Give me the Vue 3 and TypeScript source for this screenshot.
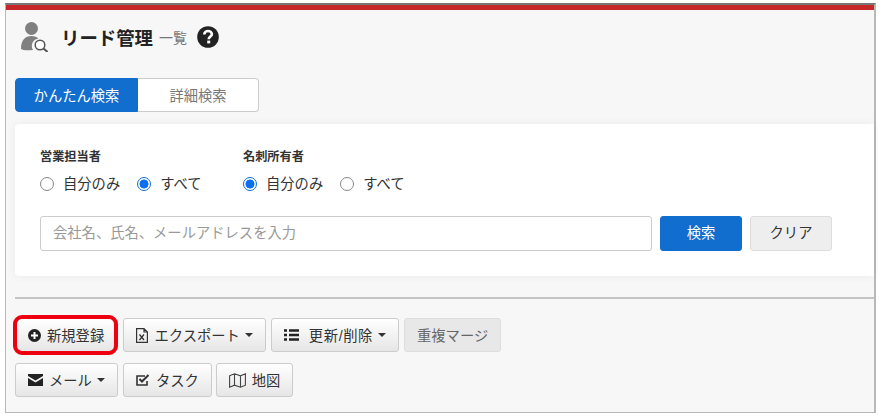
<script setup lang="ts">
const groups = [
  { label: '営業担当者', options: [{ t: '自分のみ', on: false }, { t: 'すべて', on: true }] },
  { label: '名刺所有者', options: [{ t: '自分のみ', on: true }, { t: 'すべて', on: false }] },
]
</script>

<template>
  <div class="frame">
    <div class="redbar"></div>
    <div class="inner">
      <header class="head">
        <svg class="usericon" width="27" height="30" viewBox="0 0 27 30">
          <circle cx="10.500" cy="6.500" r="6.500" fill="#808080" />
          <path d="M0 27 C0 18 4 14 10.500 14 C13.500 14 16 15 17.500 16.500 A7.500 7.500 0 0 0 12 28 C7 28.500 2 28.500 0 27 Z" fill="#808080" />
          <circle cx="19" cy="23" r="4.800" fill="#fff" stroke="#555" stroke-width="1.500" />
          <path d="M22.500 26.500 L26.500 30" stroke="#555" stroke-width="2" />
        </svg>
        <h1 class="title">リード管理</h1>
        <span class="sub">一覧</span>
        <svg class="help" width="22" height="22" viewBox="0 0 22 22">
          <circle cx="11" cy="11" r="10.800" fill="#222" />
          <path d="M7.300 8.500 C7.300 6.300 9 5 11 5 C13.300 5 14.900 6.400 14.900 8.200 C14.900 10.500 11.700 10.700 11.700 13.200" fill="none" stroke="#fff" stroke-width="2.600" />
          <rect x="10.200" y="14.600" width="3" height="2.800" fill="#fff" />
        </svg>
      </header>

      <div class="tabs">
        <div class="tab active">かんたん検索</div>
        <div class="tab">詳細検索</div>
      </div>

      <section class="card">
        <div class="groups">
          <div v-for="g in groups" :key="g.label" class="group">
            <div class="label">{{ g.label }}</div>
            <div class="radios">
              <span v-for="o in g.options" :key="o.t" class="radio-item">
                <span class="radio" :class="{ on: o.on }"></span>{{ o.t }}
              </span>
            </div>
          </div>
        </div>
        <div class="searchrow">
          <div class="input">会社名、氏名、メールアドレスを入力</div>
          <div class="sbtn primary">検索</div>
          <div class="sbtn clear">クリア</div>
        </div>
      </section>

      <hr class="rule" />

      <div class="btnrow row1">
        <div class="highlight">
          <svg width="13" height="13" viewBox="0 0 13 13"><circle cx="6.500" cy="6.500" r="6.500" fill="#222" /><path d="M6.500 3v7M3 6.500h7" stroke="#fff" stroke-width="2" /></svg>
          新規登録
        </div>
        <div class="btn export">
          <svg width="12" height="15" viewBox="0 0 12 15"><path d="M.6 .6h7.400L11.400 4V14.400H.6Z M8 .6V4H11.400" fill="none" stroke="#333" stroke-width="1.200" /><path d="M3.500 6.500l4.500 5.500M8 6.500L3.500 12" stroke="#333" stroke-width="1.300" /></svg>
          エクスポート<span class="caret"></span>
        </div>
        <div class="btn update">
          <svg width="15" height="12" viewBox="0 0 15 12"><path d="M0 1.500h3M5 1.500h10M0 6h3M5 6h10M0 10.500h3M5 10.500h10" stroke="#222" stroke-width="2.400" /></svg>
          <span class="spaced">更新/削除</span><span class="caret"></span>
        </div>
        <div class="btn disabled">重複マージ</div>
      </div>
      <div class="btnrow row2">
        <div class="btn">
          <svg width="15" height="12" viewBox="0 0 15 12"><path d="M0 0h15v2L7.500 6.500 0 2Z M0 4l7.500 4.500L15 4v8H0Z" fill="#222" /></svg>
          メール<span class="caret"></span>
        </div>
        <div class="btn">
          <svg width="14" height="12" viewBox="0 0 14 12"><path d="M11 7v4H1V2h8" fill="none" stroke="#333" stroke-width="1.600" /><path d="M3.500 5l2.500 2.500L12.500 1" fill="none" stroke="#333" stroke-width="2" /></svg>
          タスク
        </div>
        <div class="btn map">
          <svg width="17" height="15" viewBox="0 0 17 15"><path d="M.6 2.800 5.500 .8 11.500 2.800 16.400 .8V12.200L11.500 14.200 5.500 12.200 .6 14.200Z M5.500 .8V12.200M11.500 2.800V14.200" fill="none" stroke="#444" stroke-width="1.100" /></svg>
          地図
        </div>
      </div>
    </div>
  </div>
</template>

<style>
html, body { background: #fff; }
</style>

<style scoped>
.frame {
  box-sizing: border-box;
  width: 871px;
  height: 410px;
  margin: 3px 0 0 5px;
  border: 1px solid #b8b8b8;
  border-width: 2px 2px 1px 1px;
  border-top-color: #777;
  background: #f7f7f7;
  font-family: "Liberation Sans", "Noto Sans CJK JP", sans-serif;
  font-size: 14.300px;
  color: #333;
}
.redbar { height: 5px; background: #c62828; }
.inner { padding: 0 0 0 9px; }
.head { display: flex; align-items: center; height: 54px; padding-left: 6px; }
.usericon { margin-right: 13px; }
.title { margin: 0; font-size: 18.400px; font-weight: 700; color: #222; }
.sub { margin-left: 6px; font-size: 14px; color: #777; }
.help { margin-left: 10px; }
.tabs { display: flex; width: 244px; height: 34px; margin-top: 14px; }
.tab {
  box-sizing: border-box;
  flex: 1;
  display: flex;
  align-items: center;
  justify-content: center;
  padding-bottom: 2px;
  background: #fff;
  border: 1px solid #ccc;
  border-left: 0;
  border-radius: 0 4px 4px 0;
  color: #777;
}
.tab.active {
  flex: 0 0 123px;
  background: #116dce;
  border: 1px solid #116dce;
  border-radius: 4px 0 0 4px;
  color: #fff;
}
.card {
  box-sizing: border-box;
  height: 152px;
  margin-top: 12px;
  padding: 25px 0 0 25px;
  background: #fff;
  border-radius: 4px 0 0 4px;
  box-shadow: 0 0 10px rgba(0, 0, 0, .06);
}
.groups { display: flex; gap: 40px; }
.group { width: 163px; }
.label { font-size: 12.200px; font-weight: 700; color: #333; line-height: 16px; }
.radios { display: flex; gap: 17px; margin-top: 9px; line-height: 20px; }
.radio-item { display: flex; align-items: center; white-space: nowrap; }
.radio {
  box-sizing: border-box;
  width: 14px;
  height: 14px;
  margin-right: 9px;
  border: 1px solid #888;
  border-radius: 50%;
  background: #fff;
}
.radio.on { border: 1px solid #116dce; background: radial-gradient(circle, #0a70f0 0 4.200px, #fff 4.800px); }
.searchrow { display: flex; gap: 8px; margin-top: 22px; }
.input {
  box-sizing: border-box;
  width: 612px;
  height: 35px;
  padding-left: 12px;
  line-height: 33px;
  border: 1px solid #ccc;
  border-radius: 3px;
  background: #fff;
  color: #999;
}
.sbtn {
  box-sizing: border-box;
  width: 82px;
  height: 35px;
  line-height: 33px;
  text-align: center;
  border-radius: 3px;
  border: 1px solid #ddd;
}
.sbtn.primary { background: #116dce; border-color: #116dce; color: #fff; }
.sbtn.clear { background: #eee; color: #333; }
.rule { height: 2px; margin: 21px 0 0; border: 0; background: #c4c4c4; }
.btnrow { display: flex; gap: 5px; }
.row1 { margin-top: 19px; }
.row2 { margin-top: 11px; }
.btn {
  box-sizing: border-box;
  height: 34px;
  padding: 0 12px 2px;
  display: flex;
  align-items: center;
  gap: 6px;
  white-space: nowrap;
  border: 1px solid #ccc;
  border-radius: 3px;
  background: linear-gradient(#fff, #e6e6e6);
  color: #333;
}
.highlight {
  box-sizing: border-box;
  width: 104.500px;
  height: 40px;
  margin: -3px 0 -3px -2px;
  padding: 0 0 2px 11px;
  display: flex;
  align-items: center;
  gap: 6px;
  white-space: nowrap;
  border: 4px solid #ee0010;
  border-radius: 9px;
  background: linear-gradient(#fff, #e6e6e6);
}
.btn svg, .highlight svg { flex-shrink: 0; margin-top: 2px; }
.export { gap: 7px; }
.update { gap: 5px; }
.update svg { margin-right: 5px; }
.spaced { letter-spacing: .6px; }
.export .caret { margin-left: -2px; }
.row2 .caret { margin-left: -1px; }
.map { margin-left: -1px; }
.btn.disabled { background: #e8e8e8; border-color: #ddd; color: #666; }
.caret {
  width: 0;
  height: 0;
  margin-top: 2px;
  border-top: 4px solid #333;
  border-left: 4px solid transparent;
  border-right: 4px solid transparent;
}
</style>
